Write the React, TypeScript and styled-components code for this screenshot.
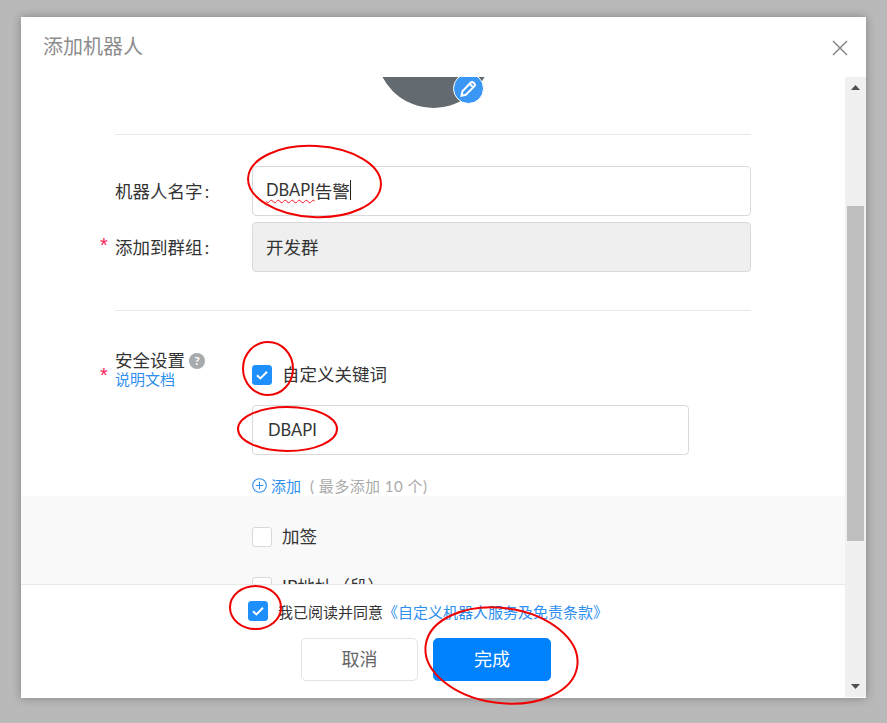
import React from 'react';
import styled, { createGlobalStyle } from 'styled-components';

const Global = createGlobalStyle`
  html, body {
    margin: 0;
    padding: 0;
    background: #b9b9b9;
  }
  body {
    font-family: Lato, "Noto Sans CJK SC", sans-serif;
    color: #333;
  }
  * {
    box-sizing: border-box;
  }
`;

const Page = styled.div`
  position: relative;
  width: 887px;
  height: 723px;
  padding: 17px 21px 0;
  overflow: hidden;
`;

const Modal = styled.div`
  display: flex;
  flex-direction: column;
  width: 845px;
  height: 681px;
  background: #fff;
  box-shadow: 0 0 9px rgba(0, 0, 0, 0.3);
`;

const Header = styled.div`
  display: flex;
  align-items: center;
  justify-content: space-between;
  height: 60px;
  flex: none;
  padding: 0 18px 0 22px;
`;

const Title = styled.div`
  margin-bottom: 3px;
  font-size: 20px;
  color: #8c8c8c;
`;

const CloseIcon = styled.svg`
  margin-top: 2px;
`;

const Main = styled.div`
  display: flex;
  flex: 1;
  min-height: 0;
`;

const Left = styled.div`
  display: flex;
  flex-direction: column;
  flex: 1;
  min-width: 0;
`;

const Body = styled.div`
  height: 507px;
  flex: none;
  overflow: hidden;
`;

const Narrow = styled.div`
  width: 636px;
  margin-left: 94px;
`;

const AvatarRow = styled.div`
  display: flex;
  justify-content: center;
  margin-top: -84px;
`;

const Avatar = styled.div`
  position: relative;
  width: 115px;
  height: 115px;
  border-radius: 50%;
  background: #646b70;
`;

const EditBadge = styled.div`
  position: absolute;
  right: 7px;
  bottom: 4px;
  display: flex;
  align-items: center;
  justify-content: center;
  width: 31px;
  height: 31px;
  border: 1px solid #fff;
  border-radius: 50%;
  background: #3a97f5;
`;

const Divider = styled.div<{ $top: number }>`
  height: 1px;
  margin-top: ${({ $top }) => $top}px;
  background: #e8e8e8;
`;

const Row = styled.div<{ $top: number }>`
  display: flex;
  align-items: center;
  margin-top: ${({ $top }) => $top}px;
`;

const Label = styled.div<{ $required?: boolean }>`
  position: relative;
  width: 137px;
  flex: none;
  padding-bottom: 2px;
  font-size: 17.5px;
  color: #333;
  ${({ $required }) =>
    $required &&
    `&::before {
      content: '*';
      position: absolute;
      left: -15px;
      top: 0;
      color: #f5225a;
      font-family: "Liberation Sans", sans-serif;
      font-size: 20px;
    }`}
`;

const Field = styled.div<{ $disabled?: boolean; $width?: number }>`
  display: flex;
  align-items: center;
  width: ${({ $width }) => ($width ? `${$width}px` : '499px')};
  height: 50px;
  padding: 0 13px 2px;
  border: 1px solid #d9d9d9;
  border-radius: 4px;
  font-size: 17.5px;
  color: #333;
  background: ${({ $disabled }) => ($disabled ? '#efefef' : '#fff')};
`;

const Misspelled = styled.span`
  font-size: 16.5px;
  text-decoration: underline wavy #f01a24 1px;
  text-underline-offset: 3px;
`;

const Caret = styled.span`
  width: 1px;
  height: 20px;
  background: #222;
`;

const Security = styled.div`
  display: flex;
  margin-top: 41px;
`;

const SecurityLabel = styled(Label)`
  &::before {
    top: 12px;
  }
`;

const LabelLine = styled.div`
  display: flex;
  align-items: center;
  gap: 4px;
  height: 18px;
  line-height: 18px;
`;

const Help = styled.span`
  display: flex;
  align-items: center;
  justify-content: center;
  width: 16px;
  height: 16px;
  border-radius: 50%;
  background: #a8abad;
  color: #fff;
  font-size: 12px;
  font-weight: 700;
`;

const DocLink = styled.a`
  display: block;
  font-size: 15px;
  line-height: 18px;
  color: #2f8ff0;
`;

const Options = styled.div`
  padding-top: 13px;
`;

const CheckRow = styled.div<{ $top?: number }>`
  display: flex;
  align-items: flex-start;
  gap: 10px;
  height: 20px;
  margin-top: ${({ $top }) => $top ?? 0}px;
  font-size: 17.5px;
  line-height: 20px;
`;

const Box = styled.span<{ $on?: boolean }>`
  display: flex;
  align-items: center;
  justify-content: center;
  width: 20px;
  height: 20px;
  flex: none;
  border-radius: 3px;
  border: 1px solid ${({ $on }) => ($on ? '#1f90fb' : '#d9d9d9')};
  background: ${({ $on }) => ($on ? '#1f90fb' : '#fff')};
`;

const KeywordField = styled(Field)`
  margin-top: 20px;
  padding: 0 15px;
  font-size: 16.5px;
`;

const AddRow = styled.div`
  display: flex;
  align-items: center;
  height: 20px;
  margin-top: 20px;
  font-size: 15px;
  color: #2f8ff0;
`;

const AddHint = styled.span`
  margin-left: 9px;
  letter-spacing: 0.45px;
  color: #aaa;
`;

const Band = styled.div`
  margin-top: 1px;
  padding: 31px 0 0 231px;
  height: 120px;
  background: #f9f9f9;
`;

const Footer = styled.div`
  flex: 1;
  border-top: 1px solid #e8e8e8;
  background: #fff;
`;

const AgreeRow = styled.div`
  display: flex;
  align-items: center;
  height: 20px;
  margin: 16px 0 0 227px;
  font-size: 15px;
  color: #333;
`;

const AgreeBox = styled(Box)`
  margin-right: 10px;
`;

const AgreeLink = styled.a`
  color: #2f8ff0;
`;

const Buttons = styled.div`
  display: flex;
  gap: 15px;
  margin: 17px 0 0 280px;
`;

const Button = styled.button<{ $primary?: boolean }>`
  width: ${({ $primary }) => ($primary ? 118 : 117)}px;
  height: 43px;
  padding: 0 0 3px;
  border-radius: 5px;
  border: 1px solid ${({ $primary }) => ($primary ? '#0082ff' : '#e3e3e3')};
  background: ${({ $primary }) => ($primary ? '#0082ff' : '#fff')};
  color: ${({ $primary }) => ($primary ? '#fff' : '#666')};
  font-family: inherit;
  font-size: 18px;
`;

const Scrollbar = styled.div`
  display: flex;
  flex-direction: column;
  width: 21px;
  height: 620px;
  flex: none;
  background: #f0f0f0;
`;

const ScrollArrow = styled.div`
  display: flex;
  align-items: center;
  justify-content: center;
  height: 21px;
  flex: none;
`;

const ScrollThumb = styled.div`
  width: 17px;
  height: 335px;
  margin: 108px 0 0 2px;
  background: #bfbfbf;
`;

const Spacer = styled.div`
  flex: 1;
`;

const AddIcon = styled.svg`
  margin-right: 4px;
`;

const Ink = styled.svg<{ $x: number; $y: number }>`
  position: absolute;
  left: ${({ $x }) => $x}px;
  top: ${({ $y }) => $y}px;
  overflow: visible;
  pointer-events: none;
`;

const Check = () => (
  <svg width="14" height="12" viewBox="0 0 14 12">
    <path d="M2 6.2 5.4 9.4 12 2.8" fill="none" stroke="#fff" strokeWidth="2" />
  </svg>
);

// hand-drawn red marks on top of the screenshot
const Ring = ({ x, y, w, h, tilt = 0 }: { x: number; y: number; w: number; h: number; tilt?: number }) => (
  <Ink $x={x} $y={y} width={w} height={h}>
    <ellipse
      cx={w / 2}
      cy={h / 2}
      rx={w / 2 - 1}
      ry={h / 2 - 1}
      fill="none"
      stroke="#f00000"
      strokeWidth="2"
      transform={`rotate(${tilt} ${w / 2} ${h / 2})`}
    />
  </Ink>
);

export default function App() {
  return (
    <Page>
      <Global />
      <Modal>
        <Header>
          <Title>添加机器人</Title>
          <CloseIcon width="16" height="16" viewBox="0 0 16 16">
            <path d="M1 1 15 15M15 1 1 15" stroke="#7b7b7b" strokeWidth="1.3" />
          </CloseIcon>
        </Header>
        <Main>
          <Left>
            <Body>
              <AvatarRow>
                <Avatar>
                  <EditBadge>
                    <svg width="18" height="18" viewBox="0 0 20 20">
                      <path
                        d="M13.2 2.8a1.9 1.9 0 0 1 2.7 0l1.3 1.3a1.9 1.9 0 0 1 0 2.7L7.6 16.4l-4.8 1 1-4.8zM12 4.4l3.6 3.6"
                        fill="none"
                        stroke="#fff"
                        strokeWidth="2.2"
                      />
                    </svg>
                  </EditBadge>
                </Avatar>
              </AvatarRow>
              <Narrow>
                <Divider $top={26} />
                <Row $top={31}>
                  <Label>机器人名字{'\u2009'}:</Label>
                  <Field>
                    <Misspelled>DBAPI</Misspelled>告警
                    <Caret />
                  </Field>
                </Row>
                <Row $top={6}>
                  <Label $required>添加到群组{'\u2009'}:</Label>
                  <Field $disabled>开发群</Field>
                </Row>
                <Divider $top={38} />
                <Security>
                  <SecurityLabel $required>
                    <LabelLine>
                      安全设置
                      <Help>?</Help>
                    </LabelLine>
                    <DocLink>说明文档</DocLink>
                  </SecurityLabel>
                  <Options>
                    <CheckRow>
                      <Box $on>
                        <Check />
                      </Box>
                      自定义关键词
                    </CheckRow>
                    <KeywordField $width={437}>DBAPI</KeywordField>
                    <AddRow>
                      <AddIcon width="15" height="15" viewBox="0 0 15 15">
                        <circle cx="7.5" cy="7.5" r="6.8" fill="none" stroke="#2f8ff0" strokeWidth="1.1" />
                        <path d="M7.5 3.8v7.4M3.8 7.5h7.4" stroke="#2f8ff0" strokeWidth="1.1" />
                      </AddIcon>
                      添加
                      <AddHint>( 最多添加 10 个)</AddHint>
                    </AddRow>
                  </Options>
                </Security>
              </Narrow>
              <Band>
                <CheckRow>
                  <Box />
                  加签
                </CheckRow>
                <CheckRow $top={30}>
                  <Box />
                  IP地址（段）
                </CheckRow>
              </Band>
            </Body>
            <Footer>
              <AgreeRow>
                <AgreeBox $on>
                  <Check />
                </AgreeBox>
                我已阅读并同意
                <AgreeLink>《自定义机器人服务及免责条款》</AgreeLink>
              </AgreeRow>
              <Buttons>
                <Button>取消</Button>
                <Button $primary>完成</Button>
              </Buttons>
            </Footer>
          </Left>
          <Scrollbar>
            <ScrollArrow>
              <svg width="9" height="5" viewBox="0 0 9 5">
                <path d="M4.5 0 9 5H0z" fill="#505050" />
              </svg>
            </ScrollArrow>
            <ScrollThumb />
            <Spacer />
            <ScrollArrow>
              <svg width="9" height="5" viewBox="0 0 9 5">
                <path d="M4.5 5 9 0H0z" fill="#505050" />
              </svg>
            </ScrollArrow>
          </Scrollbar>
        </Main>
      </Modal>
      <Ring x={247} y={145} w={135} h={73} tilt={3} />
      <Ring x={242} y={341} w={52} h={55} />
      <Ring x={237} y={406} w={101} h={46} />
      <Ring x={229} y={585} w={53} h={45} />
      <Ring x={424} y={607} w={155} h={97} tilt={8} />
    </Page>
  );
}
